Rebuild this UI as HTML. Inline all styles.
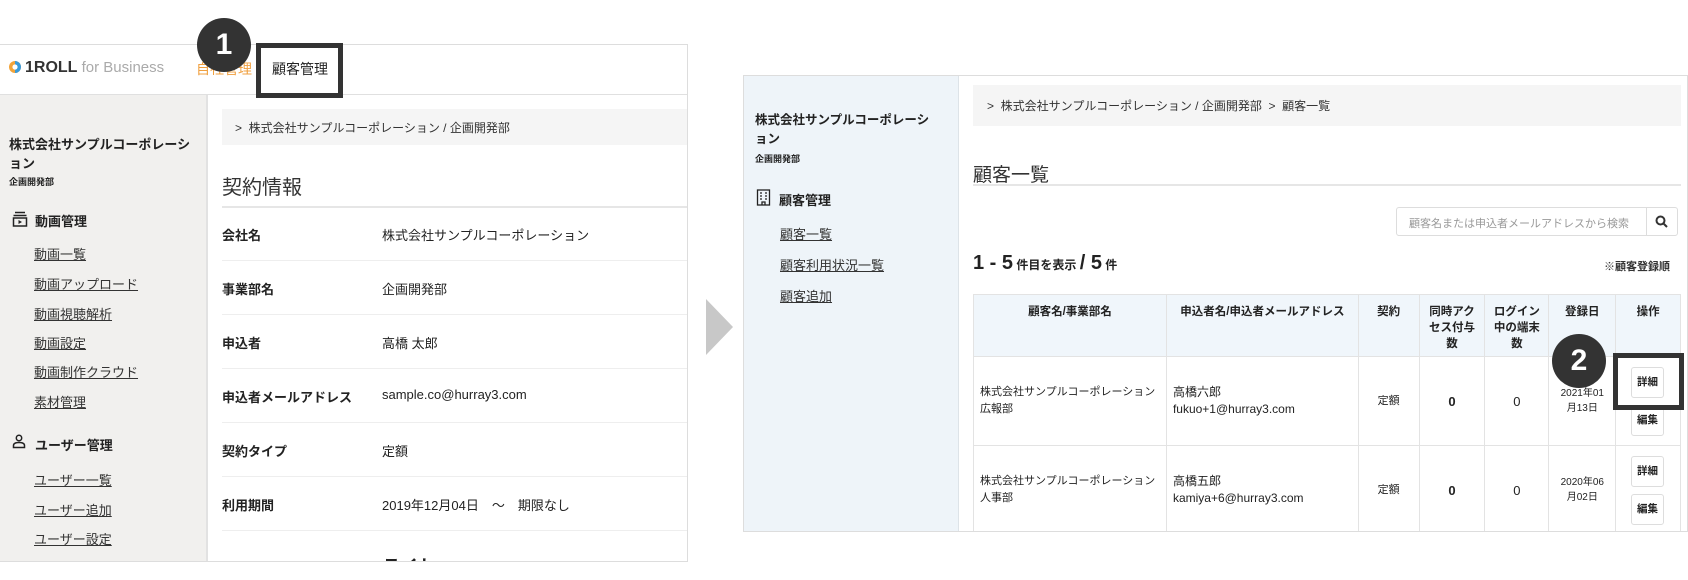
<!DOCTYPE html>
<html><head><meta charset="utf-8"><style>
*{margin:0;padding:0;box-sizing:border-box}
body{width:1688px;height:580px;background:#fff;position:relative;overflow:hidden;font-family:"Liberation Sans","Noto Sans CJK JP",sans-serif;color:#222}
.a{position:absolute;white-space:nowrap}
.u{text-decoration:underline;color:#333}
.b{font-weight:bold}
</style></head><body>
<!-- LEFT PANEL -->
<div class="a" style="left:0;top:44px;width:688px;height:518px;border-top:1px solid #ddd;border-bottom:1px solid #ddd;border-right:1px solid #ddd;overflow:hidden">
  <div class="a" style="left:0;top:50px;width:208px;height:470px;background:#f1f0ee;border-right:2px solid #e2e2e2"></div>
  <div class="a" style="left:0;top:49px;width:688px;border-top:1px solid #e0e0e0"></div>
  <!-- logo -->
  <svg class="a" style="left:8px;top:15px" width="14" height="14" viewBox="0 0 14 14"><circle cx="7" cy="7" r="6" fill="#f2a43a"/><path d="M7 1a6 6 0 0 1 0 12z" fill="#3a9ad9"/><circle cx="7" cy="7" r="2.6" fill="#fff"/></svg>
  <div class="a b" style="left:25px;top:14px;font-size:16px;color:#333">1ROLL <span style="font-weight:normal;color:#aaa;font-size:15px">for Business</span></div>
  <div class="a" style="left:196px;top:14px;font-size:14px;color:#f0a040">自社管理</div>
  <div class="a" style="left:272px;top:14px;font-size:14px;color:#222">顧客管理</div>
  <!-- breadcrumb -->
  <div class="a" style="left:222px;top:64px;width:470px;height:36px;background:#f5f5f5"></div>
  <div class="a" style="left:235px;top:74px;font-size:12px;color:#333">&gt;&nbsp; 株式会社サンプルコーポレーション / 企画開発部</div>
  <!-- sidebar -->
  <div class="a b" style="left:9px;top:90px;font-size:13px;line-height:19px">株式会社サンプルコーポレーシ<br>ョン</div>
  <div class="a b" style="left:9px;top:130px;font-size:9px">企画開発部</div>
  <svg class="a" style="left:12px;top:166px" width="16" height="16" viewBox="0 0 16 16" fill="none" stroke="#222" stroke-width="1.5"><path d="M3 1.5h10M1.5 4.5h13"/><rect x="1.5" y="7" width="13" height="8"/><path d="M6.5 9v4l3.5-2z" fill="#222" stroke="none"/></svg>
  <div class="a b" style="left:35px;top:166px;font-size:13px">動画管理</div>
  <div class="a u" style="left:34px;top:199px;font-size:13px">動画一覧</div>
  <div class="a u" style="left:34px;top:229px;font-size:13px">動画アップロード</div>
  <div class="a u" style="left:34px;top:259px;font-size:13px">動画視聴解析</div>
  <div class="a u" style="left:34px;top:288px;font-size:13px">動画設定</div>
  <div class="a u" style="left:34px;top:317px;font-size:13px">動画制作クラウド</div>
  <div class="a u" style="left:34px;top:347px;font-size:13px">素材管理</div>
  <svg class="a" style="left:12px;top:389px" width="14" height="15" viewBox="0 0 14 15" fill="none" stroke="#222" stroke-width="1.5"><circle cx="7" cy="4" r="2.7"/><path d="M1.5 13.5v-2c0-2 2-3 5.5-3s5.5 1 5.5 3v2z"/></svg>
  <div class="a b" style="left:35px;top:390px;font-size:13px">ユーザー管理</div>
  <div class="a u" style="left:34px;top:425px;font-size:13px">ユーザー一覧</div>
  <div class="a u" style="left:34px;top:455px;font-size:13px">ユーザー追加</div>
  <div class="a u" style="left:34px;top:484px;font-size:13px">ユーザー設定</div>
  <!-- content -->
  <div class="a" style="left:222px;top:126px;font-size:20px;color:#333">契約情報</div>
  <div class="a" style="left:222px;top:161px;width:470px;border-top:2px solid #e6e6e6"></div>
  <div class="a b" style="left:222px;top:180px;font-size:13px">会社名</div><div class="a" style="left:382px;top:180px;font-size:13px">株式会社サンプルコーポレーション</div>
  <div class="a" style="left:222px;top:215px;width:470px;border-top:1px solid #eee"></div>
  <div class="a b" style="left:222px;top:234px;font-size:13px">事業部名</div><div class="a" style="left:382px;top:234px;font-size:13px">企画開発部</div>
  <div class="a" style="left:222px;top:269px;width:470px;border-top:1px solid #eee"></div>
  <div class="a b" style="left:222px;top:288px;font-size:13px">申込者</div><div class="a" style="left:382px;top:288px;font-size:13px">高橋 太郎</div>
  <div class="a" style="left:222px;top:323px;width:470px;border-top:1px solid #eee"></div>
  <div class="a b" style="left:222px;top:342px;font-size:13px">申込者メールアドレス</div><div class="a" style="left:382px;top:342px;font-size:13px">sample.co@hurray3.com</div>
  <div class="a" style="left:222px;top:377px;width:470px;border-top:1px solid #eee"></div>
  <div class="a b" style="left:222px;top:396px;font-size:13px">契約タイプ</div><div class="a" style="left:382px;top:396px;font-size:13px">定額</div>
  <div class="a" style="left:222px;top:431px;width:470px;border-top:1px solid #eee"></div>
  <div class="a b" style="left:222px;top:450px;font-size:13px">利用期間</div><div class="a" style="left:382px;top:450px;font-size:13px">2019年12月04日　～　期限なし</div>
  <div class="a" style="left:222px;top:485px;width:470px;border-top:1px solid #eee"></div>
  <div class="a b" style="left:382px;top:508px;font-size:18px">ライセ</div>
</div>
<!-- marker 1 -->
<div class="a" style="left:197px;top:18px;width:54px;height:54px;border-radius:50%;background:#333;color:#fff;font-size:30px;font-weight:bold;text-align:center;line-height:54px">1</div>
<div class="a" style="left:256px;top:43px;width:87px;height:55px;border:5px solid #333"></div>
<!-- arrow -->
<svg class="a" style="left:706px;top:299px" width="27" height="56" viewBox="0 0 27 56"><path d="M0 0L27 28L0 56z" fill="#c8c8c8"/></svg>
<!-- RIGHT PANEL -->
<div class="a" style="left:743px;top:75px;width:945px;height:457px;border:1px solid #ddd;overflow:hidden">
  <div class="a" style="left:0;top:0;width:215px;height:460px;background:#eef4f9;border-right:1px solid #dde3e8"></div>
  <div class="a b" style="left:11px;top:35px;font-size:12.5px;line-height:19px">株式会社サンプルコーポレーシ<br>ョン</div>
  <div class="a b" style="left:11px;top:76px;font-size:9px">企画開発部</div>
  <svg class="a" style="left:12px;top:113px" width="15" height="17" viewBox="0 0 15 17" fill="none" stroke="#222" stroke-width="1.3"><rect x="1.5" y="1" width="12" height="15"/><path d="M4 4h2M9 4h2M4 7h2M9 7h2M4 10h2M9 10h2M6 16v-3h3v3"/></svg>
  <div class="a b" style="left:35px;top:114px;font-size:13px">顧客管理</div>
  <div class="a u" style="left:36px;top:148px;font-size:13px">顧客一覧</div>
  <div class="a u" style="left:36px;top:179px;font-size:13px">顧客利用状況一覧</div>
  <div class="a u" style="left:36px;top:210px;font-size:13px">顧客追加</div>
  <div class="a" style="left:229px;top:9px;width:708px;height:41px;background:#f5f5f5"></div>
  <div class="a" style="left:243px;top:21px;font-size:12px;color:#333">&gt;&nbsp; 株式会社サンプルコーポレーション / 企画開発部 &nbsp;&gt;&nbsp; 顧客一覧</div>
  <div class="a" style="left:229px;top:84px;font-size:19px;color:#333">顧客一覧</div>
  <div class="a" style="left:229px;top:108px;width:708px;border-top:2px solid #e6e6e6"></div>
  <div class="a" style="left:652px;top:131px;width:251px;height:29px;border:1px solid #ddd;border-radius:3px 0 0 3px;font-size:11px;color:#999;padding:7px 0 0 12px">顧客名または申込者メールアドレスから検索</div>
  <div class="a" style="left:902px;top:131px;width:32px;height:29px;border:1px solid #ddd;border-radius:0 3px 3px 0"></div>
  <svg class="a" style="left:911px;top:139px" width="13" height="13" viewBox="0 0 13 13" fill="none" stroke="#333" stroke-width="2"><circle cx="5.5" cy="5.5" r="4"/><path d="M8.5 8.5l3.5 3.5"/></svg>
  <div class="a b" style="left:229px;top:176px;font-size:20px">1 - 5<span style="font-size:12px"> 件目を表示 </span>/ 5<span style="font-size:12px"> 件</span></div>
  <div class="a b" style="left:860px;top:182px;font-size:11px;color:#333">※顧客登録順</div>
  <!-- table -->
  <table class="a" style="left:229px;top:218px;width:708px;border-collapse:collapse;font-size:11px">
    <colgroup><col style="width:193px"><col style="width:192px"><col style="width:61px"><col style="width:66px"><col style="width:64px"><col style="width:67px"><col style="width:65px"></colgroup>
    <tr style="height:62px;background:#f0f6fb;font-weight:bold;font-size:11.5px;line-height:16px;vertical-align:top;text-align:center">
      <td style="border:1px solid #e3e3e3;padding-top:9px">顧客名/事業部名</td>
      <td style="border:1px solid #e3e3e3;padding-top:9px">申込者名/申込者メールアドレス</td>
      <td style="border:1px solid #e3e3e3;padding-top:9px">契約</td>
      <td style="border:1px solid #e3e3e3;padding-top:9px">同時アク<br>セス付与<br>数</td>
      <td style="border:1px solid #e3e3e3;padding-top:9px">ログイン<br>中の端末<br>数</td>
      <td style="border:1px solid #e3e3e3;padding-top:9px">登録日</td>
      <td style="border:1px solid #e3e3e3;padding-top:9px">操作</td>
    </tr>
    <tr style="height:89px;line-height:17px">
      <td style="border:1px solid #e3e3e3;padding-left:6px">株式会社サンプルコーポレーション<br>広報部</td>
      <td style="border:1px solid #e3e3e3;padding-left:6px;font-size:12px">高橋六郎<br>fukuo+1@hurray3.com</td>
      <td style="border:1px solid #e3e3e3;text-align:center">定額</td>
      <td style="border:1px solid #e3e3e3;text-align:center;font-weight:bold;font-size:13px">0</td>
      <td style="border:1px solid #e3e3e3;text-align:center;font-size:13px">0</td>
      <td style="border:1px solid #e3e3e3;text-align:center;font-size:10px;line-height:15px">2021年01<br>月13日</td>
      <td style="border:1px solid #e3e3e3"></td>
    </tr>
    <tr style="height:89px;line-height:17px">
      <td style="border:1px solid #e3e3e3;padding-left:6px">株式会社サンプルコーポレーション<br>人事部</td>
      <td style="border:1px solid #e3e3e3;padding-left:6px;font-size:12px">高橋五郎<br>kamiya+6@hurray3.com</td>
      <td style="border:1px solid #e3e3e3;text-align:center">定額</td>
      <td style="border:1px solid #e3e3e3;text-align:center;font-weight:bold;font-size:13px">0</td>
      <td style="border:1px solid #e3e3e3;text-align:center;font-size:13px">0</td>
      <td style="border:1px solid #e3e3e3;text-align:center;font-size:10px;line-height:15px">2020年06<br>月02日</td>
      <td style="border:1px solid #e3e3e3"></td>
    </tr>
  </table>
  <div class="a b" style="left:887px;top:291px;width:33px;height:31px;border:1px solid #ddd;border-radius:3px;font-size:10.5px;text-align:center;line-height:29px">詳細</div>
  <div class="a b" style="left:887px;top:329px;width:33px;height:31px;border:1px solid #ddd;border-radius:3px;font-size:10.5px;text-align:center;line-height:29px">編集</div>
  <div class="a b" style="left:887px;top:380px;width:33px;height:31px;border:1px solid #ddd;border-radius:3px;font-size:10.5px;text-align:center;line-height:29px">詳細</div>
  <div class="a b" style="left:887px;top:418px;width:33px;height:31px;border:1px solid #ddd;border-radius:3px;font-size:10.5px;text-align:center;line-height:29px">編集</div>
</div>
<!-- marker 2 -->
<div class="a" style="left:1552px;top:334px;width:54px;height:54px;border-radius:50%;background:#333;color:#fff;font-size:30px;font-weight:bold;text-align:center;line-height:54px">2</div>
<div class="a" style="left:1613px;top:353px;width:71px;height:57px;border:5px solid #333"></div>
</body></html>
